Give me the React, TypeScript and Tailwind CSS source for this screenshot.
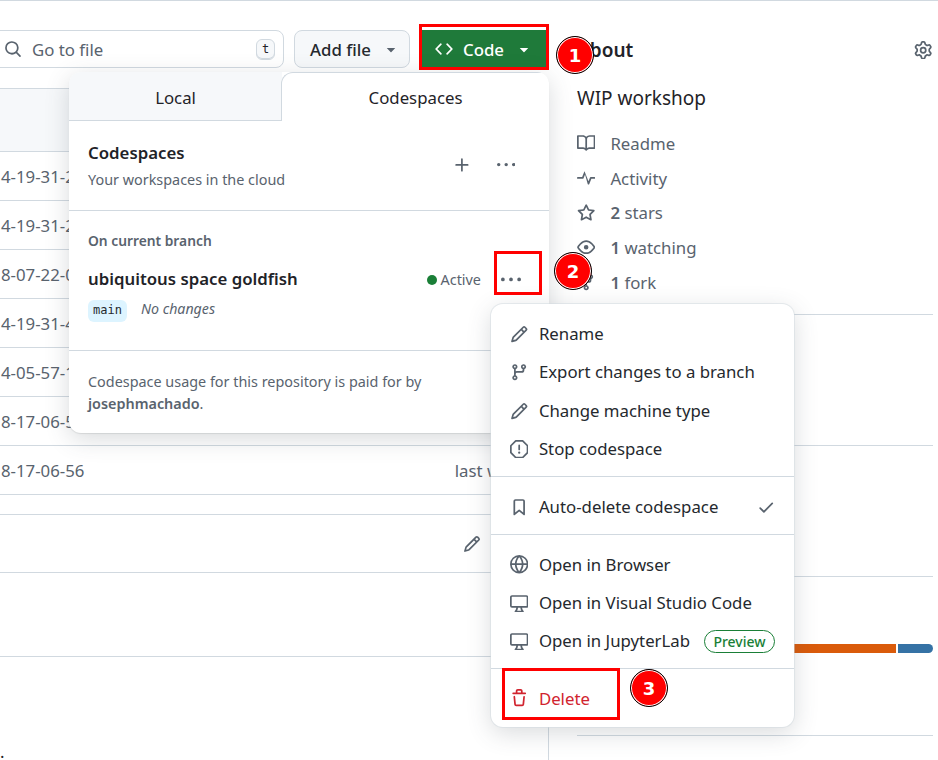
const paths = {
  book: 'M0 1.75A.75.75 0 0 1 .75 1h4.253c1.227 0 2.317.59 3 1.501A3.743 3.743 0 0 1 11.006 1h4.245a.75.75 0 0 1 .75.75v10.5a.75.75 0 0 1-.75.75h-4.507a2.25 2.25 0 0 0-1.591.659l-.622.621a.75.75 0 0 1-1.06 0l-.622-.621A2.25 2.25 0 0 0 5.258 13H.75a.75.75 0 0 1-.75-.75Zm7.251 10.324.004-5.073-.002-2.253A2.25 2.25 0 0 0 5.003 2.5H1.5v9h3.757a3.75 3.75 0 0 1 1.994.574ZM8.755 4.75l-.004 7.322a3.752 3.752 0 0 1 1.992-.572H14.5v-9h-3.495a2.25 2.25 0 0 0-2.25 2.25Z',
  pulse: 'M6 2c.306 0 .582.187.696.471L10 10.731l1.304-3.26A.751.751 0 0 1 12 7h3.25a.75.75 0 0 1 0 1.5h-2.742l-1.812 4.528a.751.751 0 0 1-1.392 0L7 4.77 5.696 8.03A.75.75 0 0 1 5 8.5H.75a.75.75 0 0 1 0-1.5h3.742l1.812-4.529A.751.751 0 0 1 6 2Z',
  star: 'M8 .25a.75.75 0 0 1 .673.418l1.882 3.815 4.21.612a.75.75 0 0 1 .416 1.279l-3.046 2.97.719 4.192a.751.751 0 0 1-1.088.791L8 12.347l-3.766 1.98a.75.75 0 0 1-1.088-.79l.72-4.194L.818 6.374a.75.75 0 0 1 .416-1.28l4.21-.611L7.327.668A.75.75 0 0 1 8 .25Zm0 2.445L6.615 5.5a.75.75 0 0 1-.564.41l-3.097.45 2.24 2.184a.75.75 0 0 1 .216.664l-.528 3.084 2.769-1.456a.75.75 0 0 1 .698 0l2.77 1.456-.53-3.084a.75.75 0 0 1 .216-.664l2.24-2.183-3.096-.45a.75.75 0 0 1-.564-.41L8 2.694Z',
  eye: 'M8 2c1.981 0 3.671.992 4.933 2.078 1.27 1.091 2.187 2.345 2.637 3.023a1.62 1.62 0 0 1 0 1.798c-.45.678-1.367 1.932-2.637 3.023C11.67 13.008 9.981 14 8 14c-1.981 0-3.671-.992-4.933-2.078C1.797 10.83.88 9.576.43 8.898a1.62 1.62 0 0 1 0-1.798c.45-.677 1.367-1.931 2.637-3.022C4.33 2.992 6.019 2 8 2ZM1.679 7.932a.12.12 0 0 0 0 .136c.411.622 1.241 1.75 2.366 2.717C5.176 11.758 6.527 12.5 8 12.5c1.473 0 2.825-.742 3.955-1.715 1.124-.967 1.954-2.096 2.366-2.717a.12.12 0 0 0 0-.136c-.412-.621-1.242-1.75-2.366-2.717C10.824 4.242 9.473 3.5 8 3.5c-1.473 0-2.825.742-3.955 1.715-1.124.967-1.954 2.096-2.366 2.717ZM8 10a2 2 0 1 1-.001-3.999A2 2 0 0 1 8 10Z',
  fork: 'M5 5.372v.878c0 .414.336.75.75.75h4.5a.75.75 0 0 0 .75-.75v-.878a2.25 2.25 0 1 1 1.5 0v.878a2.25 2.25 0 0 1-2.25 2.25h-1.5v2.128a2.251 2.251 0 1 1-1.5 0V8.5h-1.5A2.25 2.25 0 0 1 3.5 6.25v-.878a2.25 2.25 0 1 1 1.5 0ZM5 3.25a.75.75 0 1 0-1.5 0 .75.75 0 0 0 1.5 0Zm6.75.75a.75.75 0 1 0 0-1.5.75.75 0 0 0 0 1.5Zm-3 8.75a.75.75 0 1 0-1.5 0 .75.75 0 0 0 1.5 0Z',
  branch: 'M9.5 3.25a2.25 2.25 0 1 1 3 2.122V6A2.5 2.5 0 0 1 10 8.5H6a1 1 0 0 0-1 1v1.128a2.251 2.251 0 1 1-1.5 0V5.372a2.25 2.25 0 1 1 1.5 0v1.836A2.493 2.493 0 0 1 6 7h4a1 1 0 0 0 1-1v-.628A2.25 2.25 0 0 1 9.5 3.25Zm-6 0a.75.75 0 1 0 1.5 0 .75.75 0 0 0-1.5 0Zm8.25-.75a.75.75 0 1 0 0 1.5.75.75 0 0 0 0-1.5ZM4.25 12a.75.75 0 1 0 0 1.5.75.75 0 0 0 0-1.5Z',
  pencil: 'M11.013 1.427a1.75 1.75 0 0 1 2.474 0l1.086 1.086a1.75 1.75 0 0 1 0 2.474l-8.61 8.61c-.21.21-.47.364-.756.445l-3.251.93a.75.75 0 0 1-.927-.928l.929-3.25c.081-.286.235-.547.445-.758l8.61-8.61Zm.176 4.823L9.75 4.81l-6.286 6.287a.253.253 0 0 0-.064.108l-.558 1.953 1.953-.558a.253.253 0 0 0 .108-.064Zm1.238-3.763a.25.25 0 0 0-.354 0L10.811 3.75l1.439 1.44 1.263-1.263a.25.25 0 0 0 0-.354Z',
  stop: 'M4.47.22A.749.749 0 0 1 5 0h6c.199 0 .389.079.53.22l4.25 4.25c.141.14.22.331.22.53v6a.749.749 0 0 1-.22.53l-4.25 4.25A.749.749 0 0 1 11 16H5a.749.749 0 0 1-.53-.22L.22 11.53A.749.749 0 0 1 0 11V5c0-.199.079-.389.22-.53Zm.84 1.28L1.5 5.31v5.38l3.81 3.81h5.38l3.81-3.81V5.31L10.69 1.5ZM8 4a.75.75 0 0 1 .75.75v3.5a.75.75 0 0 1-1.5 0v-3.5A.75.75 0 0 1 8 4Zm0 8a1 1 0 1 1 0-2 1 1 0 0 1 0 2Z',
  bookmark: 'M3 2.75C3 1.784 3.784 1 4.75 1h6.5c.966 0 1.75.784 1.75 1.75v11.5a.75.75 0 0 1-1.227.579L8 11.722l-3.773 3.107A.751.751 0 0 1 3 14.25Zm1.75-.25a.25.25 0 0 0-.25.25v9.91l3.023-2.489a.75.75 0 0 1 .954 0l3.023 2.49V2.75a.25.25 0 0 0-.25-.25Z',
  check: 'M13.78 4.22a.75.75 0 0 1 0 1.06l-7.25 7.25a.75.75 0 0 1-1.06 0L2.22 9.28a.751.751 0 0 1 .018-1.042.751.751 0 0 1 1.042-.018L6 10.94l6.72-6.72a.75.75 0 0 1 1.06 0Z',
  globe: 'M8 0a8 8 0 1 1 0 16A8 8 0 0 1 8 0ZM5.78 8.75a9.64 9.64 0 0 0 1.363 4.177c.255.426.542.832.857 1.215.245-.296.551-.705.857-1.215A9.64 9.64 0 0 0 10.22 8.75Zm4.44-1.5a9.64 9.64 0 0 0-1.363-4.177c-.307-.51-.612-.919-.857-1.215a9.927 9.927 0 0 0-.857 1.215A9.64 9.64 0 0 0 5.78 7.25Zm-5.944 1.5H1.543a6.507 6.507 0 0 0 4.666 5.5c-.123-.181-.24-.365-.352-.552-.715-1.192-1.437-2.874-1.581-4.948Zm-2.733-1.5h2.733c.144-2.074.866-3.756 1.58-4.948.12-.197.237-.381.353-.552a6.507 6.507 0 0 0-4.666 5.5Zm10.181 1.5c-.144 2.074-.866 3.756-1.58 4.948-.12.197-.237.381-.353.552a6.507 6.507 0 0 0 4.666-5.5Zm2.733-1.5a6.507 6.507 0 0 0-4.666-5.5c.123.181.24.365.353.552.714 1.192 1.436 2.874 1.58 4.948Z',
  desktop: 'M14.25 1c.966 0 1.75.784 1.75 1.75v7.5A1.75 1.75 0 0 1 14.25 12h-3.727c.099 1.041.52 1.872 1.292 2.757A.752.752 0 0 1 11.25 16h-6.5a.75.75 0 0 1-.565-1.243c.772-.885 1.192-1.716 1.292-2.757H1.75A1.75 1.75 0 0 1 0 10.25v-7.5C0 1.784.784 1 1.75 1ZM1.75 2.5a.25.25 0 0 0-.25.25v7.5c0 .138.112.25.25.25h12.5a.25.25 0 0 0 .25-.25v-7.5a.25.25 0 0 0-.25-.25ZM9.018 12H6.982a5.72 5.72 0 0 1-.765 2.5h3.566a5.72 5.72 0 0 1-.765-2.5Z',
  trash: 'M11 1.75V3h2.25a.75.75 0 0 1 0 1.5H2.75a.75.75 0 0 1 0-1.5H5V1.75C5 .784 5.784 0 6.75 0h2.5C10.216 0 11 .784 11 1.75ZM4.496 6.675l.66 6.6a.25.25 0 0 0 .249.225h5.19a.25.25 0 0 0 .249-.225l.66-6.6a.75.75 0 0 1 1.492.149l-.66 6.6A1.748 1.748 0 0 1 10.595 15h-5.19a1.75 1.75 0 0 1-1.741-1.575l-.66-6.6a.75.75 0 1 1 1.492-.15ZM6.5 1.75V3h3V1.75a.25.25 0 0 0-.25-.25h-2.5a.25.25 0 0 0-.25.25Z',
  search: 'M10.68 11.74a6 6 0 0 1-7.922-8.982 6 6 0 0 1 8.982 7.922l3.04 3.04a.749.749 0 0 1-.326 1.275.749.749 0 0 1-.734-.215ZM11.5 7a4.499 4.499 0 1 0-8.997 0A4.499 4.499 0 0 0 11.5 7Z',
  code: 'm11.28 3.22 4.25 4.25a.75.75 0 0 1 0 1.06l-4.25 4.25a.749.749 0 0 1-1.275-.326.749.749 0 0 1 .215-.734L13.94 8l-3.72-3.72a.749.749 0 0 1 .326-1.275.749.749 0 0 1 .734.215Zm-6.56 0a.751.751 0 0 1 1.042.018.751.751 0 0 1 .018 1.042L2.06 8l3.72 3.72a.749.749 0 0 1-.326 1.275.749.749 0 0 1-.734-.215L.47 8.53a.75.75 0 0 1 0-1.06Z',
  plus: 'M7.75 2a.75.75 0 0 1 .75.75V7h4.25a.75.75 0 0 1 0 1.5H8.5v4.25a.75.75 0 0 1-1.5 0V8.5H2.75a.75.75 0 0 1 0-1.5H7V2.75A.75.75 0 0 1 7.75 2Z',
  kebab: 'M8 9a1.5 1.5 0 1 0 0-3 1.5 1.5 0 0 0 0 3ZM1.5 9a1.5 1.5 0 1 0 0-3 1.5 1.5 0 0 0 0 3Zm13 0a1.5 1.5 0 1 0 0-3 1.5 1.5 0 0 0 0 3Z',
  caret: 'm4.427 7.427 3.396 3.396a.25.25 0 0 0 .354 0l3.396-3.396A.25.25 0 0 0 11.396 7H4.604a.25.25 0 0 0-.177.427Z',
  gear: 'M8 0a8.2 8.2 0 0 1 .701.031C9.444.095 9.99.645 10.16 1.29l.288 1.107c.018.066.079.158.212.224.231.114.454.243.668.386.123.082.233.09.299.071l1.103-.303c.644-.176 1.392.021 1.82.63.27.385.506.792.704 1.218.315.675.111 1.422-.364 1.891l-.814.806c-.049.048-.098.147-.088.294.016.257.016.515 0 .772-.01.147.038.246.088.294l.814.806c.475.469.679 1.216.364 1.891a7.977 7.977 0 0 1-.704 1.217c-.428.61-1.176.807-1.82.63l-1.102-.302c-.067-.019-.177-.011-.3.071a5.909 5.909 0 0 1-.668.386c-.133.066-.194.158-.211.224l-.29 1.106c-.168.646-.715 1.196-1.458 1.26a8.006 8.006 0 0 1-1.402 0c-.743-.064-1.289-.614-1.458-1.26l-.289-1.106c-.018-.066-.079-.158-.212-.224a5.738 5.738 0 0 1-.668-.386c-.123-.082-.233-.09-.299-.071l-1.103.303c-.644.176-1.392-.021-1.82-.63a8.12 8.12 0 0 1-.704-1.218c-.315-.675-.111-1.422.363-1.891l.815-.806c.05-.048.098-.147.088-.294a6.214 6.214 0 0 1 0-.772c.01-.147-.038-.246-.088-.294l-.815-.806C.635 6.045.431 5.298.746 4.623a7.92 7.92 0 0 1 .704-1.217c.428-.61 1.176-.807 1.82-.63l1.102.302c.067.019.177.011.3-.071.214-.143.437-.272.668-.386.133-.066.194-.158.211-.224l.29-1.106C6.009.645 6.556.095 7.299.03 7.53.01 7.764 0 8 0Zm-.571 1.525c-.036.003-.108.036-.137.146l-.289 1.105c-.147.561-.549.967-.998 1.189-.173.086-.34.183-.5.29-.417.278-.97.423-1.529.27l-1.103-.303c-.109-.03-.175.016-.195.045-.22.312-.412.644-.573.99-.014.031-.021.11.059.19l.815.806c.411.406.562.957.53 1.456a4.709 4.709 0 0 0 0 .582c.032.499-.119 1.05-.53 1.456l-.815.806c-.081.08-.073.159-.059.19.162.346.353.677.573.989.02.03.085.076.195.046l1.102-.303c.56-.153 1.113-.008 1.53.27.161.107.328.204.501.29.447.222.85.629.997 1.189l.289 1.105c.029.109.101.143.137.146a6.6 6.6 0 0 0 1.142 0c.036-.003.108-.036.137-.146l.289-1.105c.147-.561.549-.967.998-1.189.173-.086.34-.183.5-.29.417-.278.97-.423 1.529-.27l1.103.303c.109.029.175-.016.195-.045.22-.313.411-.644.573-.99.014-.031.021-.11-.059-.19l-.815-.806c-.411-.406-.562-.957-.53-1.456a4.709 4.709 0 0 0 0-.582c-.032-.499.119-1.05.53-1.456l.815-.806c.081-.08.073-.159.059-.19a6.464 6.464 0 0 0-.573-.989c-.02-.03-.085-.076-.195-.046l-1.102.303c-.56.153-1.113.008-1.53-.27a4.44 4.44 0 0 0-.501-.29c-.447-.222-.85-.629-.997-1.189l-.289-1.105c-.029-.11-.101-.143-.137-.146a6.6 6.6 0 0 0-1.142 0ZM11 8a3 3 0 1 1-6 0 3 3 0 0 1 6 0ZM9.5 8a1.5 1.5 0 1 0-3.001.001A1.5 1.5 0 0 0 9.5 8Z',
}

type IconName = keyof typeof paths

function Icon({ name, className = 'size-[18px] text-[#59636e]' }: { name: IconName; className?: string }) {
  return (
    <svg viewBox="0 0 16 16" fill="currentColor" className={`shrink-0 ${className}`}>
      <path d={paths[name]} />
    </svg>
  )
}

// ─── Data ─────────────────────────────────────────────────────────────────────

const fileRows = ['4-19-31-22', '4-19-31-26', '8-07-22-00', '4-19-31-43', '4-05-57-11', '8-17-06-56', '8-17-06-56']

const aboutRows: { icon: IconName; count?: string; label: string }[] = [
  { icon: 'book', label: 'Readme' },
  { icon: 'pulse', label: 'Activity' },
  { icon: 'star', count: '2', label: 'stars' },
  { icon: 'eye', count: '1', label: 'watching' },
  { icon: 'fork', count: '1', label: 'fork' },
]

function MenuItem({ icon, label, children }: { icon: IconName; label: string; children?: React.ReactNode }) {
  return (
    <div className="flex h-[38.3px] items-center gap-[10.5px] pl-[19px] pr-[19px] text-[#25292e]">
      <Icon name={icon} className="size-[18.4px] text-[#59636e]" />
      <span className="pb-px">{label}</span>
      {children}
    </div>
  )
}

function Marker({ n, className }: { n: number; className: string }) {
  return (
    <div className={`absolute z-40 flex size-[38px] items-center justify-center rounded-full border border-black bg-[#ff0000] font-['DejaVu_Sans',sans-serif] text-[18px] font-bold text-white shadow-[inset_0_0_0_1px_#ffffff] ${className}`}>
      {n}
    </div>
  )
}

// ─── Page ─────────────────────────────────────────────────────────────────────

export default function App() {
  return (
    <div className="relative flex h-[760px] w-[938px] overflow-hidden border-t border-[#d1d9e0] bg-white font-['Noto_Sans',sans-serif] text-[16.8px] text-[#1f2328]">
      {/* Files column */}
      <div className="w-[549px] shrink-0">
        <div className="flex h-[87px] items-start gap-[10px] pt-[29px]">
          <div className="-ml-[10px] flex h-[38px] w-[294px] items-center rounded-lg border border-[#d1d9e0] pl-[13px] pr-[8px]">
            <Icon name="search" className="size-[18px] text-[#59636e]" />
            <span className="ml-[10px] flex-1 pt-px text-[#59636e]">Go to file</span>
            <span className="flex h-[21px] w-[19px] items-center justify-center rounded-md border border-[#d1d9e0] bg-[#f6f8fa] font-['DejaVu_Sans_Mono',monospace] text-[12px] shadow-[inset_0_-1px_0_#d1d9e0]">t</span>
          </div>
          <div className="flex h-[38px] w-[116px] items-center rounded-lg border border-[#d1d9e0] bg-[#f6f8fa] pl-[15px] font-medium text-[#25292e]">
            <span className="pt-px">Add file</span>
            <Icon name="caret" className="ml-[11px] size-[18px] text-[#59636e]" />
          </div>
          <div className="flex h-[38px] w-[128px] items-center bg-[#1f7a3a] pl-[15px] font-medium text-white">
            <Icon name="code" className="size-[18px] text-white" />
            <span className="ml-[10px] pt-px">Code</span>
            <Icon name="caret" className="ml-[11px] size-[18px] text-white" />
          </div>
        </div>

        <div className="h-[672px] border-r border-[#d1d9e0]">
          <div className="h-[64px] border-y border-[#d1d9e0] bg-[#f6f8fa]" />
          {fileRows.map((name, i) => (
            <div key={i} className="flex h-[49px] items-center justify-between border-b border-[#d1d9e0] pl-px pr-[20px] pt-[2px] text-[#59636e]">
              <span>{name}</span>
              <span>last week</span>
            </div>
          ))}
          <div className="h-[20px] border-b border-[#d1d9e0]" />
          <div className="flex h-[58px] items-center border-b border-[#d1d9e0] pl-[463px]">
            <Icon name="pencil" className="size-[18px] text-[#59636e]" />
          </div>
          <div className="h-[84px] border-b border-[#d1d9e0]" />
          <div className="pt-[85px] leading-[20px]">.</div>
        </div>
      </div>

      {/* About sidebar */}
      <div className="ml-[28px] w-[356px] shrink-0">
        <div className="h-[314px] border-b border-[#d1d9e0]">
          <div className="flex items-center justify-between pr-px pt-[36px]">
            <span className="text-[19px] font-semibold leading-[26px]">About</span>
            <Icon name="gear" className="size-[18.4px] text-[#59636e]" />
          </div>
          <div className="mt-[21px] text-[19px] leading-[28px]">WIP workshop</div>
          <div className="mt-[14px] flex flex-col text-[#59636e]">
            {aboutRows.map((row) => (
              <div key={row.label} className="flex h-[34.75px] items-center gap-[15px]">
                <Icon name={row.icon} className="size-[18.4px] text-[#59636e]" />
                <span>
                  {row.count && <b className="font-semibold">{row.count} </b>}
                  {row.label}
                </span>
              </div>
            ))}
          </div>
        </div>
        <div className="h-[131px] border-b border-[#d1d9e0]" />
        <div className="h-[131px] border-b border-[#d1d9e0]" />
        <div className="h-[159px] border-b border-[#d1d9e0] pt-[67px]">
          <div className="flex h-[9px] gap-[2px] overflow-hidden rounded-full">
            <div className="flex-1 bg-[#da5b0b]" />
            <div className="w-[35px] bg-[#3572a5]" />
          </div>
        </div>
      </div>

      {/* Clone popover */}
      <div className="absolute left-[69px] top-[71px] z-10 h-[361px] w-[480px] overflow-hidden rounded-xl bg-white shadow-[0_1px_1px_rgba(31,35,40,0.1),0_6px_24px_rgba(66,74,83,0.2)]">
        <div className="flex h-[49px] text-center">
          <div className="flex w-[213px] items-center justify-center border-b border-[#d1d9e0] bg-[#f6f8fa] pt-[3px]">Local</div>
          <div className="-ml-px flex flex-1 items-center justify-center rounded-tl-xl border-l border-t border-[#d1d9e0] pt-[2px]">Codespaces</div>
        </div>
        <div className="flex h-[90px] items-center justify-between border-b border-[#d1d9e0] pl-[19px] pr-[34px]">
          <div>
            <div className="font-semibold leading-[24px]">Codespaces</div>
            <div className="mt-[5px] text-[14.4px] leading-[20px] text-[#59636e]">Your workspaces in the cloud</div>
          </div>
          <div className="flex items-center gap-[25px]">
            <Icon name="plus" className="size-[18.4px] text-[#59636e]" />
            <Icon name="kebab" className="size-[18.4px] text-[#59636e]" />
          </div>
        </div>
        <div className="h-[140px] border-b border-[#d1d9e0] pl-[19px] pr-[28px] pt-[20px]">
          <div className="text-[13.8px] font-semibold leading-[20px] text-[#59636e]">On current branch</div>
          <div className="mt-[16px] flex items-center">
            <span className="flex-1 font-semibold leading-[24px]">ubiquitous space goldfish</span>
            <span className="mt-px size-[10px] rounded-full bg-[#1a7f37]" />
            <span className="ml-[4px] pt-[2px] text-[14.4px] text-[#59636e]">Active</span>
            <Icon name="kebab" className="ml-[20px] mt-[2px] size-[20px] text-[#59636e]" />
          </div>
          <div className="mt-[7px] flex items-center gap-[14px]">
            <span className="flex h-[22px] w-[39px] items-center justify-center rounded-md bg-[#ddf4ff] pb-[2px] font-['DejaVu_Sans_Mono',monospace] text-[12px] text-[#25292e]">main</span>
            <span className="mb-[4px] text-[14.2px] italic text-[#59636e]">No changes</span>
          </div>
        </div>
        <div className="pl-[19px] pr-[40px] pt-[20px] text-[14.4px] leading-[22px] text-[#59636e]">
          Codespace usage for this repository is paid for by <b className="font-semibold">josephmachado</b>.
        </div>
      </div>

      {/* Codespace actions menu */}
      <div className="absolute left-[491px] top-[303px] z-20 h-[423px] w-[303px] rounded-xl bg-white pt-[11px] shadow-[0_0_0_1px_rgba(209,217,224,0.5),0_6px_24px_rgba(66,74,83,0.2)]">
        <MenuItem icon="pencil" label="Rename" />
        <MenuItem icon="branch" label="Export changes to a branch" />
        <MenuItem icon="pencil" label="Change machine type" />
        <MenuItem icon="stop" label="Stop codespace" />
        <div className="mb-[11px] mt-[8px] h-px bg-[#d1d9e0]" />
        <MenuItem icon="bookmark" label="Auto-delete codespace">
          <Icon name="check" className="ml-auto size-[18.4px] text-[#59636e]" />
        </MenuItem>
        <div className="mb-[10px] mt-[8px] h-px bg-[#d1d9e0]" />
        <MenuItem icon="globe" label="Open in Browser" />
        <MenuItem icon="desktop" label="Open in Visual Studio Code" />
        <MenuItem icon="desktop" label="Open in JupyterLab">
          <span className="ml-auto flex h-[23px] w-[71px] items-center justify-center rounded-full border border-[#1a7f37] text-[14px] font-medium text-[#1a7f37]">Preview</span>
        </MenuItem>
        <div className="mb-[10px] mt-[8px] h-px bg-[#d1d9e0]" />
        <div className="flex h-[38.3px] items-center gap-[10.5px] pl-[19px] text-[#d1242f]">
          <Icon name="trash" className="size-[18.4px] text-[#d1242f]" />
          <span>Delete</span>
        </div>
      </div>

      {/* Annotations */}
      <div className="absolute left-[419px] top-[23px] z-30 h-[46px] w-[130px] border-[3px] border-[#ff0000]" />
      <div className="absolute left-[494px] top-[250px] z-30 h-[44px] w-[48px] border-[3px] border-[#ff0000]" />
      <div className="absolute left-[502px] top-[667px] z-30 h-[52px] w-[118px] border-[3px] border-[#ff0000]" />
      <Marker n={1} className="left-[556px] top-[35px]" />
      <Marker n={2} className="left-[554px] top-[251px]" />
      <Marker n={3} className="left-[630px] top-[668px]" />
    </div>
  )
}
